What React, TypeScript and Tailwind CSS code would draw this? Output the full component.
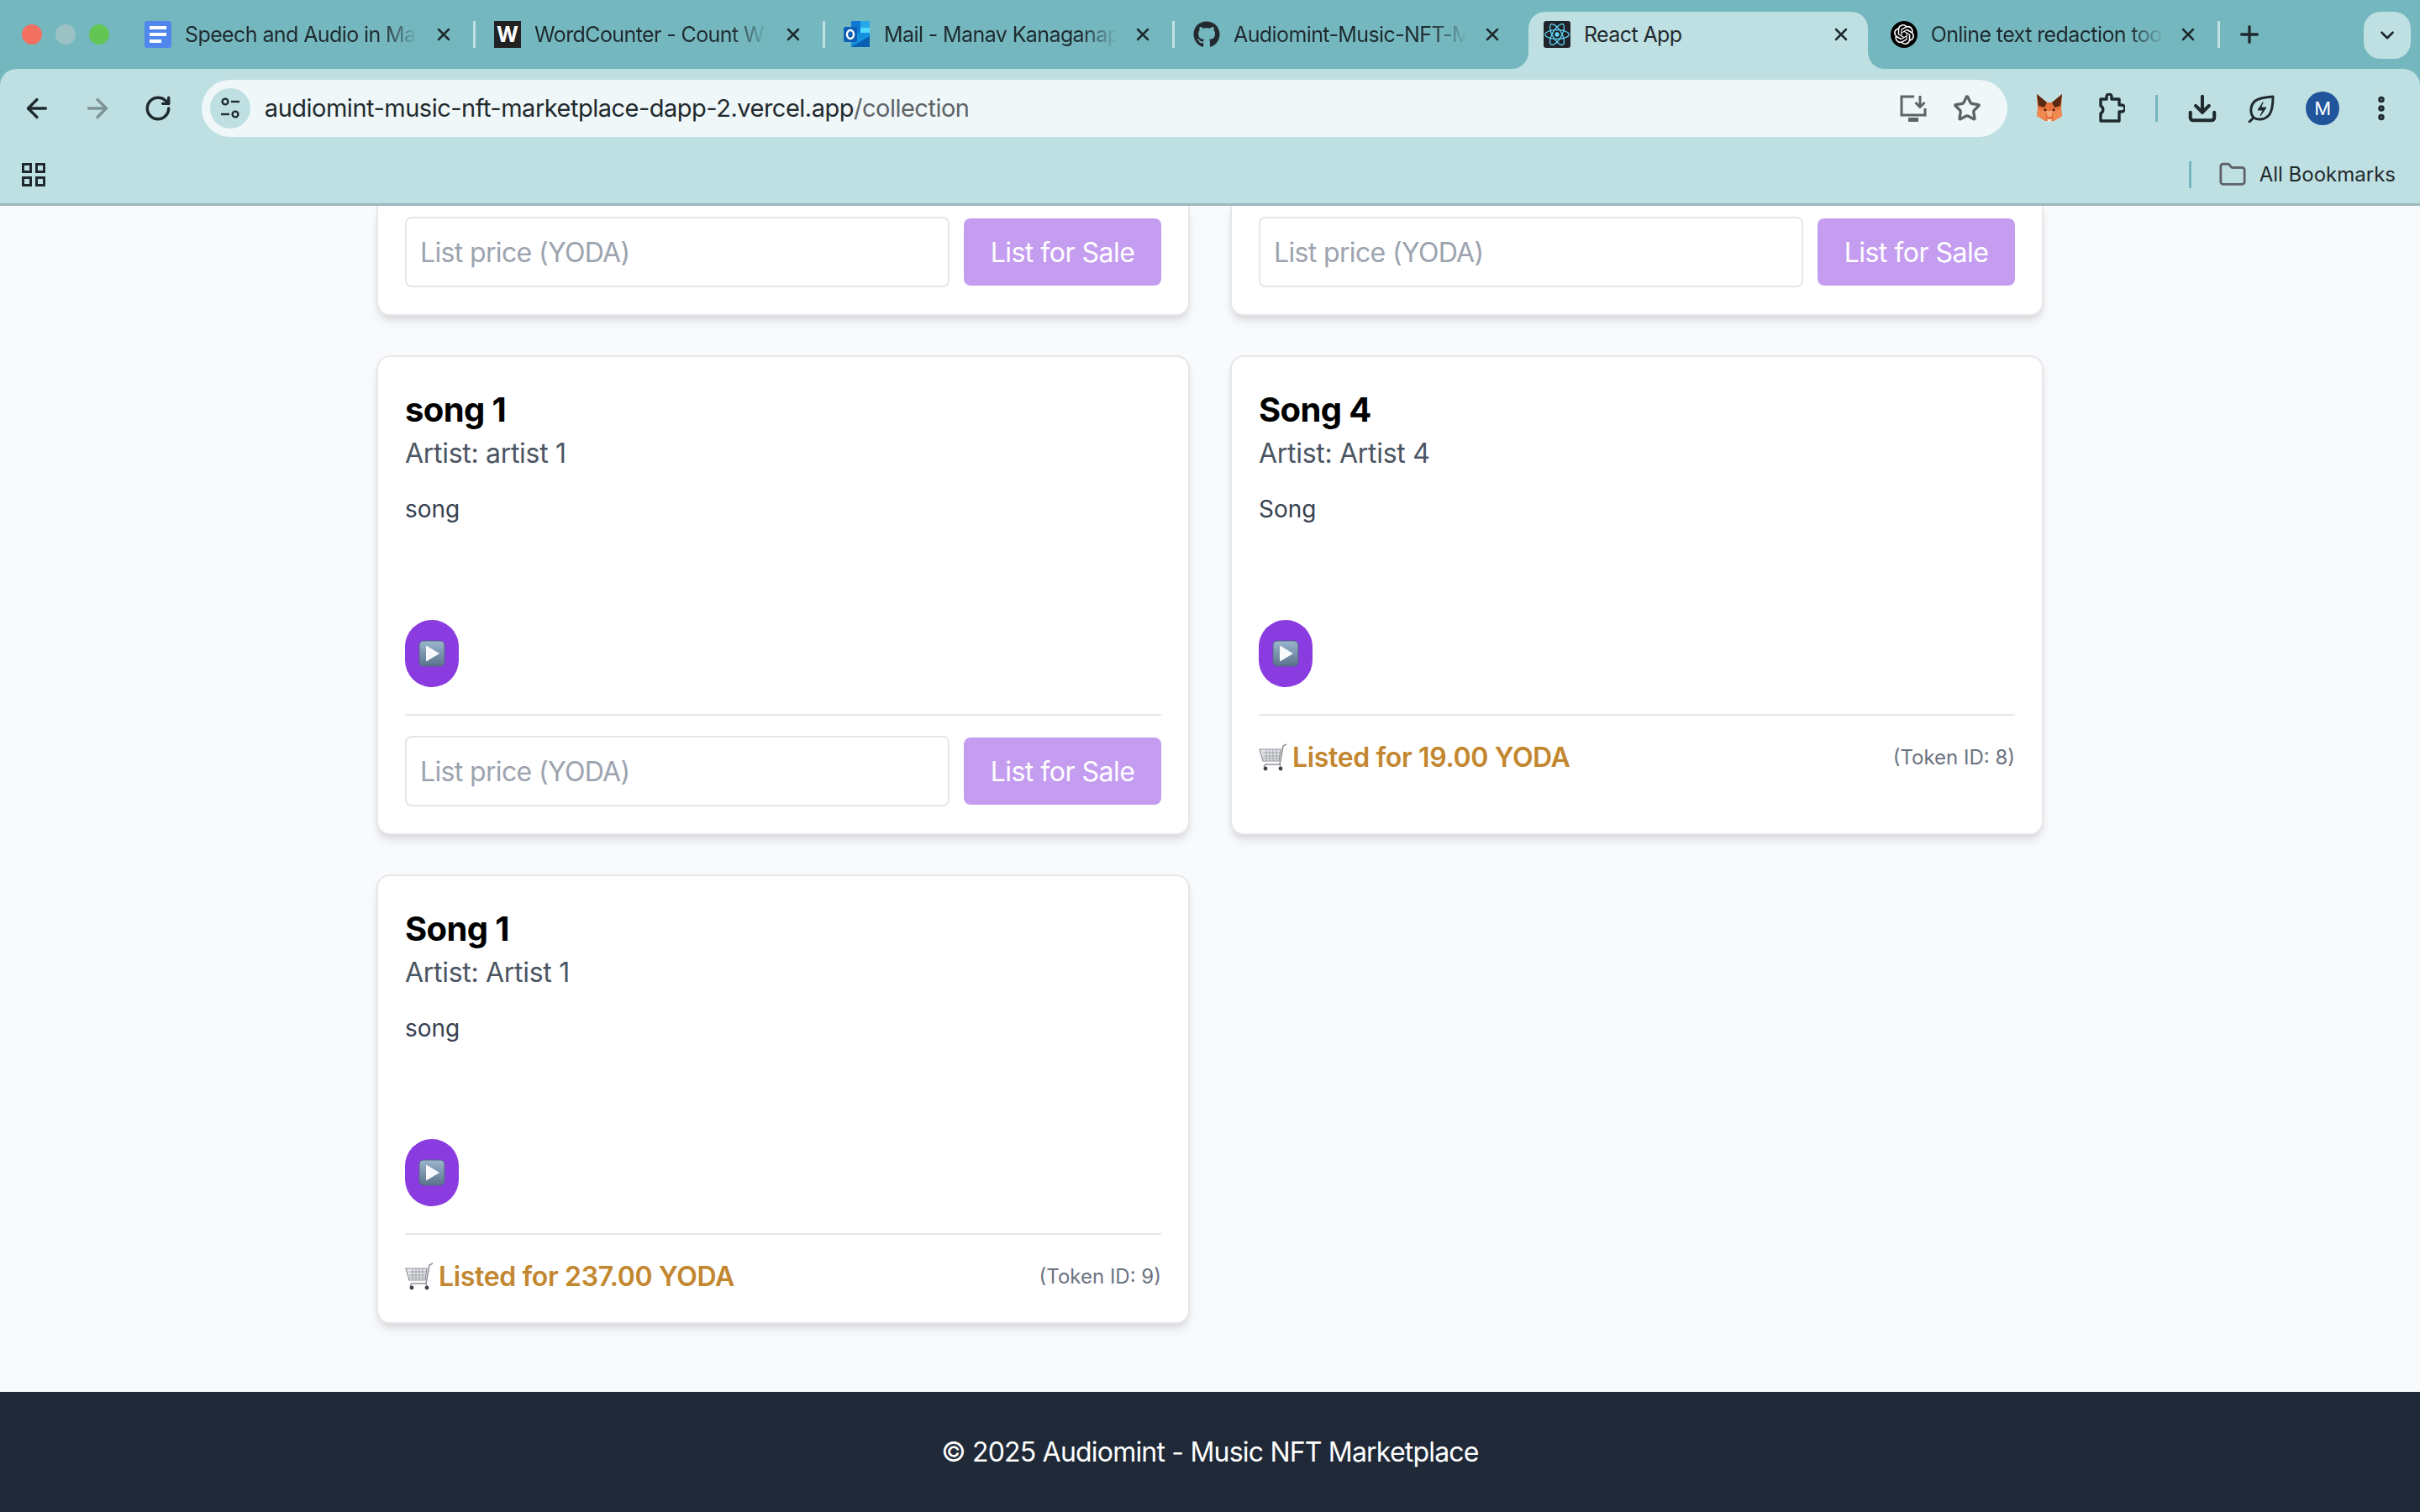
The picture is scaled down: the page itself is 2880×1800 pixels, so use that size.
import { ArrowLeft, ArrowRight, ChevronDown, Download, EllipsisVertical, Folder, Plus, RotateCw, Star, X } from "lucide-react";
import { FaGithub, FaReact } from "react-icons/fa";
import { SiOpenai } from "react-icons/si";

const DocsIcon = () => (
  <div className="w-[32px] h-[32px] rounded-[3px] bg-[#5087ec] flex flex-col justify-center gap-[4px] pl-[6px]">
    <div className="w-[20px] h-[4px] bg-white" />
    <div className="w-[20px] h-[4px] bg-white" />
    <div className="w-[14px] h-[4px] bg-white" />
  </div>
);

const WordIcon = () => (
  <div className="w-[32px] h-[32px] bg-[#222222] flex items-center justify-center text-white text-[25px] font-bold leading-none">W</div>
);

const OutlookIcon = () => (
  <svg width="32" height="34" viewBox="0 0 32 34">
    <rect x="9" y="1" width="21" height="16" fill="#0f78d4" />
    <rect x="20" y="1" width="11" height="9" fill="#28a8ea" />
    <rect x="20" y="9" width="11" height="9" fill="#50d9ff" />
    <path d="M9 15 L31 15 L31 32 L9 32 Z" fill="#1490df" />
    <path d="M9 32 L31 19 L31 32 Z" fill="#0a5fb0" />
    <rect x="0" y="8" width="16" height="18" rx="2" fill="#0e5fb5" />
    <ellipse cx="8" cy="17" rx="4" ry="5" fill="none" stroke="#ffffff" strokeWidth="2.4" />
  </svg>
);

const ReactIcon = () => (
  <div className="w-[32px] h-[32px] rounded-[3px] bg-[#20232a] flex items-center justify-center">
    <FaReact className="w-[30px] h-[30px] text-[#61dafb]" />
  </div>
);

const OpenAiIcon = () => (
  <div className="w-[32px] h-[32px] rounded-full bg-black flex items-center justify-center">
    <SiOpenai className="w-[24px] h-[24px] text-white" />
  </div>
);

const tabs = [
  { title: "Speech and Audio in Ma", icon: <DocsIcon /> },
  { title: "WordCounter - Count W", icon: <WordIcon /> },
  { title: "Mail - Manav Kanaganap", icon: <OutlookIcon /> },
  { title: "Audiomint-Music-NFT-M", icon: <FaGithub className="w-[32px] h-[32px] text-[#24292f]" /> },
];

const Tab = ({ title, icon, sep }: { title: string; icon: React.ReactNode; sep: boolean }) => (
  <div className="w-[416px] h-[54px] flex items-center pl-[22px] shrink-0">
    <div className="w-[32px] flex justify-center shrink-0">{icon}</div>
    <div className="w-[280px] ml-[16px] pt-[2px] text-[25px] tracking-[-0.6px] text-[#1f2a2e] whitespace-nowrap overflow-hidden [mask-image:linear-gradient(to_right,black_85%,transparent)]">{title}</div>
    <X className="w-[24px] h-[24px] ml-[19px] text-[#1f2a2e] shrink-0" strokeWidth={2.5} />
    <div className={`w-[3px] h-[32px] ml-[23px] shrink-0 ${sep ? "bg-[#bfe0e2]" : ""}`} />
  </div>
);

const SiteInfoIcon = () => (
  <svg width="24" height="26" viewBox="0 0 24 26" fill="none" stroke="#1f2a2e" strokeWidth="2.4">
    <circle cx="6" cy="5" r="3.4" />
    <path d="M13 5 H23" />
    <path d="M1 20 H11" />
    <circle cx="18" cy="20" r="3.4" />
  </svg>
);

const InstallIcon = () => (
  <svg width="34" height="32" viewBox="0 0 34 32" fill="none" stroke="#5f6368" strokeWidth="3">
    <path d="M18 2 H3 V24 H31 V16" />
    <path d="M25 1 V14 M19.5 9 L25 14.5 L30.5 9" />
    <path d="M11 29.5 H23" strokeWidth="5" />
  </svg>
);

const FoxIcon = () => (
  <svg width="32" height="34" viewBox="0 0 32 34">
    <path d="M1 0 L13 10 H19 L31 0 L30 18 L31 26 L21 32 H11 L1 26 L2 18 Z" fill="#e8733a" />
    <path d="M1 0 L13 10 L10 16 L3 14 Z" fill="#5b2a12" />
    <path d="M31 0 L19 10 L22 16 L29 14 Z" fill="#5b2a12" />
    <path d="M2 18 L12 20 L11 32 L1 26 Z" fill="#f08a52" />
    <path d="M30 18 L20 20 L21 32 L31 26 Z" fill="#f08a52" />
    <path d="M12 20 H20 L18 27 H14 Z" fill="#f4a77c" />
    <path d="M13 30 H19 L17.5 33 H14.5 Z" fill="#f5e6d8" />
    <circle cx="11" cy="19" r="1.4" fill="#3b1d0c" />
    <circle cx="21" cy="19" r="1.4" fill="#3b1d0c" />
  </svg>
);

const ExtensionIcon = () => (
  <svg width="34" height="36" viewBox="0 0 34 36" fill="none" stroke="#1f2a2e" strokeWidth="3.4" strokeLinejoin="round">
    <path d="M5 7 H12 V4 A3 3 0 0 1 18 4 V7 H27 V14 H30 A4 4 0 0 1 30 22 H27 V33 H5 V24 A5 5 0 0 0 5 15 Z" />
  </svg>
);

const LeafIcon = () => (
  <svg width="34" height="34" viewBox="0 0 34 34" fill="none" stroke="#1f2a2e" strokeWidth="3" strokeLinejoin="round" strokeLinecap="round">
    <path d="M31 3 C31 3 31 18 27 24 C23 30 14 32 8 28 C3 22 4 13 10 8 C16 4 31 3 31 3 Z" />
    <path d="M8 28 L3 33" />
    <path d="M19 10 L13 19 H19 L16 26 L23 16 H17 Z" fill="#1f2a2e" strokeWidth="1" />
  </svg>
);

const AppsIcon = () => (
  <div className="grid grid-cols-2 gap-[4px] w-[28px]">
    <div className="w-[12px] h-[12px] border-[3px] border-[#1f2a2e]" />
    <div className="w-[12px] h-[12px] border-[3px] border-[#1f2a2e]" />
    <div className="w-[12px] h-[12px] border-[3px] border-[#1f2a2e]" />
    <div className="w-[12px] h-[12px] border-[3px] border-[#1f2a2e]" />
  </div>
);

const PlayEmoji = () => (
  <svg width="32" height="32" viewBox="0 0 32 32">
    <defs>
      <linearGradient id="playBox" x1="0" y1="0" x2="0" y2="1">
        <stop offset="0" stopColor="#9db6cf" />
        <stop offset="1" stopColor="#5a728c" />
      </linearGradient>
    </defs>
    <rect x="1" y="1" width="30" height="30" rx="5" fill="url(#playBox)" stroke="#4f6a84" strokeWidth="1" />
    <path d="M9 6.5 L25 16 L9 25.5 Z" fill="#f7f9fb" />
  </svg>
);

const CartEmoji = () => (
  <svg width="34" height="34" viewBox="0 0 34 34" fill="none" stroke="#8f9399" strokeWidth="1.2">
    <path d="M1 7 H26 L24 21 H5 Z" fill="#e4e6e9" />
    <path d="M5 11 H25 M5 15 H25 M5 18 H24 M9 7 V21 M13 7 V21 M17 7 V21 M21 7 V21" strokeWidth="0.8" />
    <path d="M33 1 L29 3 L25 25 H7" strokeWidth="1.6" />
    <circle cx="8" cy="30" r="2.4" fill="#3f4247" stroke="none" />
    <circle cx="26" cy="30" r="2.4" fill="#3f4247" stroke="none" />
    <path d="M8 25 L6 28 M25 25 L26 28" strokeWidth="1.4" />
  </svg>
);

const ListForm = () => (
  <div className="flex items-center gap-[17px]">
    <input
      placeholder="List price (YODA)"
      className="flex-1 min-w-0 h-[84px] px-[16px] border-2 border-[#e5e7eb] rounded-[8px] bg-white text-[32px] tracking-[-0.65px] placeholder:text-[#9ca3af] outline-none"
    />
    <button className="w-[235px] h-[80px] pt-[2px] rounded-[8px] bg-[#c59df0] text-white text-[32px] tracking-[-0.5px]">List for Sale</button>
  </div>
);

const Listed = ({ price, id }: { price: string; id: number }) => (
  <div className="flex items-center justify-between h-[48px] pt-[3px]">
    <div className="flex items-center gap-[6px] text-[32px] font-semibold tracking-[-0.35px] text-[#c2872f]">
      <CartEmoji />
      <span>Listed for {price} YODA</span>
    </div>
    <span className="text-[24px] text-[#6b7280]">(Token ID: {id})</span>
  </div>
);

const SongCard = ({ title, artist, desc, children }: { title: string; artist: string; desc: string; children: React.ReactNode }) => (
  <div className="bg-white border-2 border-[#e5e7eb] rounded-[16px] px-[32px] pt-[35px] pb-[32px] shadow-[0_8px_12px_-2px_rgba(0,0,0,0.1),0_4px_8px_-4px_rgba(0,0,0,0.1)]">
    <h3 className="text-[40px] leading-[56px] tracking-[-0.6px] font-bold text-black">{title}</h3>
    <p className="text-[32px] leading-[48px] tracking-[-0.3px] text-[#4b5563]">Artist: {artist}</p>
    <p className="mt-[22px] text-[28px] leading-[40px] text-[#374151]">{desc}</p>
    <button className="mt-[112px] w-[64px] h-[80px] rounded-full bg-[#8a3ce0] flex items-center justify-center">
      <PlayEmoji />
    </button>
    <div className="mt-[32px] pt-[24px] border-t-2 border-[#e5e7eb]">{children}</div>
  </div>
);

const CutCard = () => (
  <div className="bg-white border-2 border-t-0 border-[#e5e7eb] rounded-b-[16px] px-[32px] pt-[13px] pb-[32px] shadow-[0_8px_12px_-2px_rgba(0,0,0,0.1),0_4px_8px_-4px_rgba(0,0,0,0.1)]">
    <ListForm />
  </div>
);

export default function App() {
  return (
    <div className="h-screen flex flex-col overflow-hidden font-['Inter',sans-serif] bg-[#f9fafb]">
      {/* tab strip */}
      <div className="h-[82px] shrink-0 bg-[#74b7be] flex items-start pt-[14px] pr-[11px]">
        <div className="w-[150px] h-[54px] shrink-0 flex items-center gap-[16px] pl-[26px]">
          <div className="w-[24px] h-[24px] rounded-full bg-[#f36f5f]" />
          <div className="w-[24px] h-[24px] rounded-full bg-[#9bc1c5]" />
          <div className="w-[24px] h-[24px] rounded-full bg-[#62c554]" />
        </div>
        {tabs.map((t, i) => (
          <Tab key={t.title} title={t.title} icon={t.icon} sep={i < 3} />
        ))}
        <div className="relative w-[404px] h-[68px] ml-[5px] mr-[7px] shrink-0 bg-[#bfe0e2] rounded-t-[20px] flex items-center pl-[18px] pb-[14px]">
          <div className="absolute -left-[22px] bottom-0 w-[22px] h-[22px] bg-[#bfe0e2]">
            <div className="w-full h-full bg-[#74b7be] rounded-br-[20px]" />
          </div>
          <div className="absolute -right-[22px] bottom-0 w-[22px] h-[22px] bg-[#bfe0e2]">
            <div className="w-full h-full bg-[#74b7be] rounded-bl-[20px]" />
          </div>
          <ReactIcon />
          <span className="ml-[16px] pt-[2px] text-[25px] tracking-[-0.6px] text-[#1f2a2e]">React App</span>
          <X className="w-[24px] h-[24px] ml-auto mr-[20px] text-[#1f2a2e]" strokeWidth={2.5} />
        </div>
        <div className="w-[412px] h-[54px] flex items-center pl-[20px] shrink-0">
          <OpenAiIcon />
          <div className="w-[280px] ml-[16px] pt-[2px] text-[25px] tracking-[-0.6px] text-[#1f2a2e] whitespace-nowrap overflow-hidden [mask-image:linear-gradient(to_right,black_85%,transparent)]">Online text redaction too</div>
          <X className="w-[24px] h-[24px] ml-[17px] text-[#1f2a2e] shrink-0" strokeWidth={2.5} />
          <div className="w-[3px] h-[32px] ml-[23px] bg-[#bfe0e2] shrink-0" />
        </div>
        <Plus className="w-[32px] h-[32px] ml-[19px] mt-[11px] text-[#1f2a2e]" strokeWidth={2.5} />
        <div className="ml-auto w-[56px] h-[56px] rounded-[20px] bg-[#bfe0e2] flex items-center justify-center">
          <ChevronDown className="w-[26px] h-[26px] text-[#1f2a2e]" strokeWidth={2.5} />
        </div>
      </div>

      {/* toolbar */}
      <div className="shrink-0 bg-[#74b7be]">
        <div className="bg-[#bfe0e2] rounded-t-[20px] border-b-[3px] border-[#9db8bc]">
          <div className="h-[92px] flex items-center pl-[26px] pr-[28px] pt-[2px]">
            <ArrowLeft className="w-[36px] h-[36px] text-[#1f2a2e]" strokeWidth={2.2} />
            <ArrowRight className="w-[36px] h-[36px] ml-[36px] text-[#7d9297]" strokeWidth={2.2} />
            <RotateCw className="w-[34px] h-[34px] ml-[37px] text-[#1f2a2e]" strokeWidth={2.4} />
            <div className="ml-[35px] w-[2152px] h-[68px] rounded-full bg-[#eff7f8] flex items-center pl-[10px] pr-[31px]">
              <div className="w-[48px] h-[48px] rounded-full bg-[#bfe0e2] flex items-center justify-center">
                <SiteInfoIcon />
              </div>
              <span className="ml-[17px] text-[29px] text-[#1f2a2e] tracking-[-0.5px]">
                audiomint-music-nft-marketplace-dapp-2.vercel.app<span className="text-[#5f6368]">/collection</span>
              </span>
              <div className="ml-auto flex items-center gap-[30px]">
                <InstallIcon />
                <Star className="w-[34px] h-[34px] text-[#5f6368]" strokeWidth={2.4} />
              </div>
            </div>
            <div className="ml-[34px]"><FoxIcon /></div>
            <div className="ml-[40px]"><ExtensionIcon /></div>
            <div className="ml-[36px] w-[3px] h-[32px] bg-[#74b7be]" />
            <Download className="ml-[34px] w-[38px] h-[38px] text-[#1f2a2e]" strokeWidth={2.6} />
            <div className="ml-[34px]"><LeafIcon /></div>
            <div className="ml-[36px] w-[40px] h-[40px] rounded-full bg-[#20549b] text-white text-[22px] flex items-center justify-center">M</div>
            <EllipsisVertical className="ml-[32px] w-[36px] h-[36px] text-[#1f2a2e]" strokeWidth={3} />
          </div>
          <div className="h-[68px] flex items-center pl-[26px] pr-[29px]">
            <AppsIcon />
            <div className="ml-auto w-[3px] h-[32px] bg-[#74b7be]" />
            <Folder className="ml-[32px] w-[34px] h-[34px] text-[#5f6368]" strokeWidth={2} />
            <span className="ml-[15px] text-[24px] text-[#1f2a2e]">All Bookmarks</span>
          </div>
        </div>
      </div>

      {/* page */}
      <main className="flex-1 min-h-0 overflow-hidden">
        <div className="w-[1984px] mx-auto grid grid-cols-2 gap-x-[48px] gap-y-[47px] items-start">
          <CutCard />
          <CutCard />
          <div className="col-span-2 grid grid-cols-2 gap-x-[48px]">
            <SongCard title="song 1" artist="artist 1" desc="song">
              <ListForm />
            </SongCard>
            <SongCard title="Song 4" artist="Artist 4" desc="Song">
              <Listed price="19.00" id={8} />
            </SongCard>
          </div>
          <SongCard title="Song 1" artist="Artist 1" desc="song">
            <Listed price="237.00" id={9} />
          </SongCard>
        </div>
      </main>

      <footer className="h-[143px] shrink-0 bg-[#1f2937] flex items-center justify-center text-white text-[32px] tracking-[-0.8px]">
        © 2025 Audiomint - Music NFT Marketplace
      </footer>
    </div>
  );
}
